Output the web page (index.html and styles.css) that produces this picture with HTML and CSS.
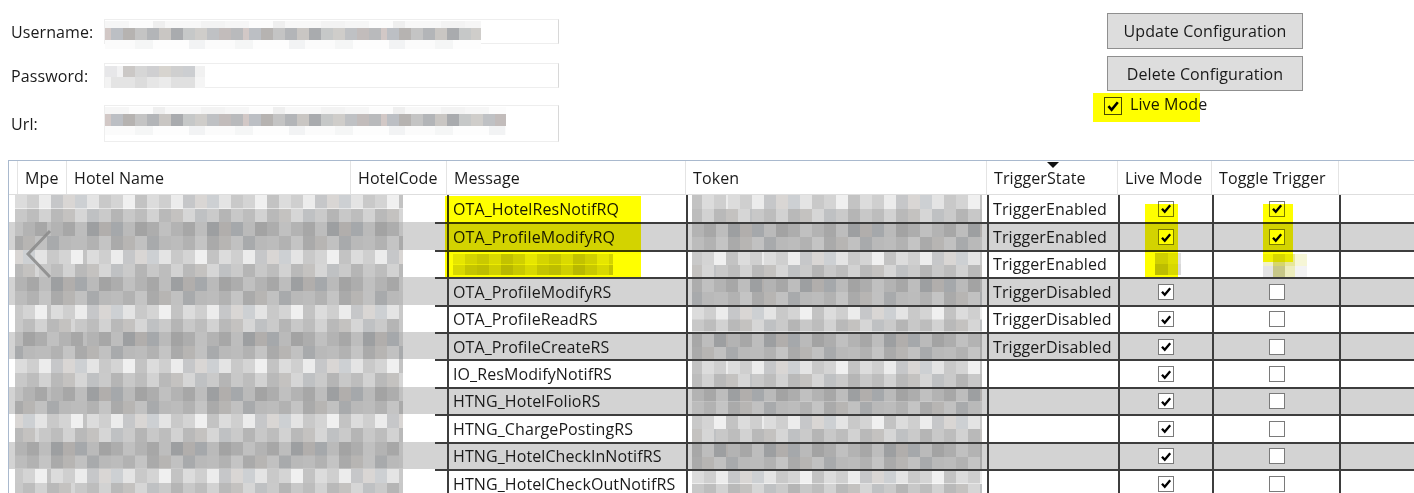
FILE: index.html
```html
<!DOCTYPE html>
<html>
<head>
<meta charset="utf-8">
<title>Configuration</title>
<link rel="stylesheet" href="styles.css">
</head>
<body>
<div class="top">
  <div class="form">
    <div class="frow r1">
      <span class="lbl">Username:</span>
      <div class="tbox">
        <div class="strip faint w-user mt-2"></div>
        <div class="strip mz-mid w-user"></div>
        <div class="strip faint2 w-user"></div>
      </div>
    </div>
    <div class="frow r2">
      <span class="lbl">Password:</span>
      <div class="tbox">
        <div class="strip pw1 w-pass mt-3"></div>
        <div class="strip pw2 w-pass"></div>
      </div>
    </div>
    <div class="frow r3">
      <span class="lbl">Url:</span>
      <div class="tbox">
        <div class="strip faint w-url mt-2"></div>
        <div class="strip mz-mid w-url"></div>
        <div class="strip faint2 w-url"></div>
      </div>
    </div>
  </div>
  <div class="actions">
    <button class="btn b1">Update Configuration</button>
    <button class="btn b2">Delete Configuration</button>
    <label class="live">
      <span class="cb cb-top"><svg viewBox="0 0 16 16"><path d="M3.4 8.2 L6.6 11.8 L12.8 4.2" fill="none" stroke="#000" stroke-width="2.6"/></svg></span>
      <span class="live-txt">Live Mode</span>
      <span class="hl hl-live"></span>
    </label>
  </div>
</div>

<div class="grid">
  <div class="ghead">
    <div class="hc"></div>
    <div class="hc">Mpe</div>
    <div class="hc">Hotel Name</div>
    <div class="hc">HotelCode</div>
    <div class="hc">Message</div>
    <div class="hc">Token</div>
    <div class="hc">TriggerState</div>
    <div class="hc">Live Mode</div>
    <div class="hc">Toggle Trigger</div>
    <div class="hc hc-rest"></div>
    <span class="sort"></span>
  </div>
  <div class="gbody">
    <div class="row">
      <div class="blurc"><div class="mz mz-l o1"></div></div>
      <div class="dc msg">OTA_HotelResNotifRQ</div>
      <div class="dc tok"><div class="mz mz-l o2"></div></div>
      <div class="dc trig">TriggerEnabled</div>
      <div class="dc cbc"><span class="cb"><svg viewBox="0 0 16 16"><path d="M3.4 8.2 L6.6 11.8 L12.8 4.2" fill="none" stroke="#000" stroke-width="2.6"/></svg></span></div>
      <div class="dc cbc"><span class="cb"><svg viewBox="0 0 16 16"><path d="M3.4 8.2 L6.6 11.8 L12.8 4.2" fill="none" stroke="#000" stroke-width="2.6"/></svg></span></div>
      <div class="dc rest"></div>
    </div>
    <div class="row alt">
      <div class="blurc"><div class="mz mz-d o2"></div></div>
      <div class="dc msg">OTA_ProfileModifyRQ</div>
      <div class="dc tok"><div class="mz mz-d o1"></div></div>
      <div class="dc trig">TriggerEnabled</div>
      <div class="dc cbc"><span class="cb"><svg viewBox="0 0 16 16"><path d="M3.4 8.2 L6.6 11.8 L12.8 4.2" fill="none" stroke="#000" stroke-width="2.6"/></svg></span></div>
      <div class="dc cbc"><span class="cb"><svg viewBox="0 0 16 16"><path d="M3.4 8.2 L6.6 11.8 L12.8 4.2" fill="none" stroke="#000" stroke-width="2.6"/></svg></span></div>
      <div class="dc rest"></div>
    </div>
    <div class="row">
      <div class="blurc"><div class="mz mz-l o3"></div></div>
      <div class="dc msg"><div class="mz mz-msg"></div></div>
      <div class="dc tok"><div class="mz mz-l o3"></div></div>
      <div class="dc trig">TriggerEnabled</div>
      <div class="dc cbc"><span class="blob blob-lm"></span></div>
      <div class="dc cbc"><span class="blob blob-tt"></span></div>
      <div class="dc rest"></div>
    </div>
    <div class="row alt">
      <div class="blurc"><div class="mz mz-d o1"></div></div>
      <div class="dc msg">OTA_ProfileModifyRS</div>
      <div class="dc tok"><div class="mz mz-d o3"></div></div>
      <div class="dc trig">TriggerDisabled</div>
      <div class="dc cbc"><span class="cb"><svg viewBox="0 0 16 16"><path d="M3.4 8.2 L6.6 11.8 L12.8 4.2" fill="none" stroke="#000" stroke-width="2.6"/></svg></span></div>
      <div class="dc cbc"><span class="cb"></span></div>
      <div class="dc rest"></div>
    </div>
    <div class="row">
      <div class="blurc"><div class="mz mz-l o2"></div></div>
      <div class="dc msg">OTA_ProfileReadRS</div>
      <div class="dc tok"><div class="mz mz-l o1"></div></div>
      <div class="dc trig">TriggerDisabled</div>
      <div class="dc cbc"><span class="cb"><svg viewBox="0 0 16 16"><path d="M3.4 8.2 L6.6 11.8 L12.8 4.2" fill="none" stroke="#000" stroke-width="2.6"/></svg></span></div>
      <div class="dc cbc"><span class="cb"></span></div>
      <div class="dc rest"></div>
    </div>
    <div class="row alt">
      <div class="blurc"><div class="mz mz-d o3"></div></div>
      <div class="dc msg">OTA_ProfileCreateRS</div>
      <div class="dc tok"><div class="mz mz-d o2"></div></div>
      <div class="dc trig">TriggerDisabled</div>
      <div class="dc cbc"><span class="cb"><svg viewBox="0 0 16 16"><path d="M3.4 8.2 L6.6 11.8 L12.8 4.2" fill="none" stroke="#000" stroke-width="2.6"/></svg></span></div>
      <div class="dc cbc"><span class="cb"></span></div>
      <div class="dc rest"></div>
    </div>
    <div class="row">
      <div class="blurc"><div class="mz mz-l o1"></div></div>
      <div class="dc msg">IO_ResModifyNotifRS</div>
      <div class="dc tok"><div class="mz mz-l o2"></div></div>
      <div class="dc trig"></div>
      <div class="dc cbc"><span class="cb"><svg viewBox="0 0 16 16"><path d="M3.4 8.2 L6.6 11.8 L12.8 4.2" fill="none" stroke="#000" stroke-width="2.6"/></svg></span></div>
      <div class="dc cbc"><span class="cb"></span></div>
      <div class="dc rest"></div>
    </div>
    <div class="row alt">
      <div class="blurc"><div class="mz mz-d o2"></div></div>
      <div class="dc msg">HTNG_HotelFolioRS</div>
      <div class="dc tok"><div class="mz mz-d o1"></div></div>
      <div class="dc trig"></div>
      <div class="dc cbc"><span class="cb"><svg viewBox="0 0 16 16"><path d="M3.4 8.2 L6.6 11.8 L12.8 4.2" fill="none" stroke="#000" stroke-width="2.6"/></svg></span></div>
      <div class="dc cbc"><span class="cb"></span></div>
      <div class="dc rest"></div>
    </div>
    <div class="row">
      <div class="blurc"><div class="mz mz-l o3"></div></div>
      <div class="dc msg">HTNG_ChargePostingRS</div>
      <div class="dc tok"><div class="mz mz-l o3"></div></div>
      <div class="dc trig"></div>
      <div class="dc cbc"><span class="cb"><svg viewBox="0 0 16 16"><path d="M3.4 8.2 L6.6 11.8 L12.8 4.2" fill="none" stroke="#000" stroke-width="2.6"/></svg></span></div>
      <div class="dc cbc"><span class="cb"></span></div>
      <div class="dc rest"></div>
    </div>
    <div class="row alt">
      <div class="blurc"><div class="mz mz-d o1"></div></div>
      <div class="dc msg">HTNG_HotelCheckInNotifRS</div>
      <div class="dc tok"><div class="mz mz-d o2"></div></div>
      <div class="dc trig"></div>
      <div class="dc cbc"><span class="cb"><svg viewBox="0 0 16 16"><path d="M3.4 8.2 L6.6 11.8 L12.8 4.2" fill="none" stroke="#000" stroke-width="2.6"/></svg></span></div>
      <div class="dc cbc"><span class="cb"></span></div>
      <div class="dc rest"></div>
    </div>
    <div class="row">
      <div class="blurc"><div class="mz mz-l o2"></div></div>
      <div class="dc msg">HTNG_HotelCheckOutNotifRS</div>
      <div class="dc tok"><div class="mz mz-l o1"></div></div>
      <div class="dc trig"></div>
      <div class="dc cbc"><span class="cb"><svg viewBox="0 0 16 16"><path d="M3.4 8.2 L6.6 11.8 L12.8 4.2" fill="none" stroke="#000" stroke-width="2.6"/></svg></span></div>
      <div class="dc cbc"><span class="cb"></span></div>
      <div class="dc rest"></div>
    </div>

    <svg class="chev" viewBox="0 0 28 50"><polyline points="25,2 3,25 25,48" fill="none" stroke="#8a8a8a" stroke-width="3"/></svg>
    <span class="hl hl-msg"></span>
    <span class="hl hl-lm"></span>
    <span class="hl hl-tt"></span>
  </div>
</div>
</body>
</html>
```

FILE: styles.css
```css
* { box-sizing: border-box; }

body {
  margin: 0;
  font-family: "Open Sans", "Noto Sans", sans-serif;
  font-size: 16px;
  letter-spacing: 0.1px;
  color: #1a1a1a;
  background: #fff;
  overflow: hidden;
}

/* ---------- top area ---------- */
.top {
  display: flex;
  height: 160px;
}

.form {
  display: flex;
  flex-direction: column;
  padding-left: 11px;
}

.frow {
  display: flex;
  align-items: center;
}

.r1 { margin-top: 19px; height: 25px; }
.r2 { margin-top: 19px; height: 25px; }
.r3 { margin-top: 17px; height: 37px; }

.lbl { width: 93px; white-space: nowrap; }

.tbox {
  align-self: stretch;
  width: 455px;
  border: 1px solid #eeeeee;
  border-right-color: #d8d8d8;
  display: flex;
  flex-direction: column;
}

.strip { height: 7px; flex: none; }
.mt-2 { margin-top: 1px; }
.mt-3 { margin-top: 2px; }
.w-user { width: 376px; }
.w-pass { width: 100px; }
.w-url { width: 401px; }

.strip.mz-mid {
  height: 12px;
  background-image: repeating-linear-gradient(90deg,
    #d2c8c6 0 6px, #bcbfc4 6px 18px, #b6b3b1 18px 30px, #c4c4c4 30px 42px, #b3b5b8 42px 54px,
    #c9c6c3 54px 66px, #a9abae 66px 78px, #c6c8c8 78px 90px, #cfcdca 90px 102px, #bfc1c4 102px 114px,
    #c2bcbb 114px 126px, #b9babc 126px 138px);
}
.strip.faint {
  background-image: repeating-linear-gradient(90deg,
    #f6f6f6 0 24px, #fcfcfc 24px 48px, #efefef 48px 60px, #f8f8f8 60px 96px, #f3f3f3 96px 120px);
}
.strip.faint2 {
  height: 9px;
  background-image: repeating-linear-gradient(90deg,
    #fbfbfb 0 30px, #f5f6f6 30px 48px, #fdfdfd 48px 84px, #f2f3f4 84px 100px);
}
.strip.pw1 {
  height: 11px;
  background-image: repeating-linear-gradient(90deg,
    #e7e7e9 0 12px, #f2f2f3 12px 18px, #cbc8c6 18px 30px, #d6d6d6 30px 42px, #cfcfd1 42px 54px,
    #d7d4cf 54px 66px, #cfcfcf 66px 78px, #ccced1 78px 90px, #f1f1f1 90px 100px);
}
.strip.pw2 {
  height: 11px;
  background-image: repeating-linear-gradient(90deg,
    #f3f3f3 0 6px, #e4e4e4 6px 30px, #dcdcdc 30px 42px, #e6e6e6 42px 54px, #ebebeb 54px 66px,
    #e0e0e0 66px 90px, #f5f5f5 90px 100px);
}

.actions {
  margin-left: auto;
  margin-right: 111px;
  width: 196px;
  padding-top: 13px;
  display: flex;
  flex-direction: column;
}

.btn {
  font: inherit;
  letter-spacing: inherit;
  color: #1a1a1a;
  background: #dddddd;
  border: 1px solid #8f8f8f;
  padding: 0;
  margin: 0;
}
.b1 { height: 36px; }
.b2 { height: 35px; margin-top: 7px; }

.live {
  position: relative;
  display: flex;
  align-items: flex-start;
  height: 29px;
  margin-top: 2px;
  margin-left: -14px;
  padding-left: 11px;
  padding-top: 4px;
  gap: 8px;
}
.live-txt { line-height: 20px; margin-top: -3px; }

.cb {
  width: 16px;
  height: 16px;
  border: 1px solid #7a7a7a;
  background: #fff;
  display: flex;
  align-items: center;
  justify-content: center;
  flex: none;
}
.cb svg { width: 15px; height: 15px; display: block; }
.cb-top { width: 18px; height: 18px; border-color: #4a4a4a; }
.cb-top svg { width: 16px; height: 16px; }

.hl {
  position: absolute;
  background: #ffff00;
  mix-blend-mode: multiply;
  pointer-events: none;
}
.hl-live { left: 0; top: 0; width: 107px; height: 29px; }

/* ---------- grid ---------- */
.grid {
  --cols: 9px 49px 284px 96px 239px 301px 131px 94px 127px 1fr;
  margin-left: 8px;
  border-top: 1px solid #a9b9ce;
  border-left: 1px solid #a9b9ce;
}

.ghead {
  position: relative;
  display: grid;
  grid-template-columns: var(--cols);
  height: 34px;
  border-bottom: 1px solid #dedede;
}

.hc {
  display: flex;
  align-items: center;
  padding-left: 7px;
  border-right: 1px solid #e4e4e4;
  white-space: nowrap;
}
.hc-rest { border-right: none; }

.sort {
  position: absolute;
  left: 1038px;
  top: 1px;
  width: 0;
  height: 0;
  border-left: 6px solid transparent;
  border-right: 6px solid transparent;
  border-top: 6px solid #111;
}

.gbody { position: relative; }

.row {
  display: grid;
  grid-template-columns: var(--cols);
  height: 27.4px;
  background-color: #ffffff;
}
.row.alt { background-color: #d3d3d3; }

.blurc {
  grid-column: 1 / 5;
  display: flex;
  padding-left: 6px;
  background-color: #ffffff;
}
.row.alt .blurc { background-color: #d3d3d3; }
.blurc .mz { width: 388px; flex: none; }
.blurc::after {
  content: "";
  width: 12px;
  margin-left: auto;
}
.row + .row .blurc::after { border-top: 2px solid #3d3d3d; }

.dc {
  border-left: 2px solid #3d3d3d;
  display: flex;
  align-items: center;
  white-space: nowrap;
  overflow: hidden;
}
.row + .row .dc { border-top: 2px solid #3d3d3d; }

.msg { padding-left: 4px; }
.trig { padding-left: 4px; }
.tok { padding: 0 5px 0 4px; align-items: stretch; }
.tok .mz { flex: 1; }
.cbc { justify-content: center; }

/* ---------- mosaic (pixelated blur) ---------- */
.mz {
  align-self: stretch;
  background-repeat: repeat-x;
  background-size: 100% 50%, 100% 50%;
  background-position: 0 0, 0 100%;
}
.mz.o2 { background-position: 36px 0, 60px 100%; }
.mz.o3 { background-position: 72px 0, 24px 100%; }

.mz-l {
  background-image:
    repeating-linear-gradient(90deg,
      #dcdcdc 0 12px, #cfcfcf 12px 24px, #ececec 24px 36px, #c6c7c9 36px 48px,
      #d9d6d4 48px 60px, #cdd0d3 60px 72px, #e4e4e4 72px 84px, #c9c9c9 84px 96px,
      #d4d4d4 96px 108px, #f0f0f0 108px 120px, #c3c3c3 120px 132px),
    repeating-linear-gradient(90deg,
      #c8c8c8 0 12px, #bdbdbd 12px 24px, #d2d2d2 24px 36px, #b9b9b9 36px 48px,
      #c4c2c0 48px 60px, #d6d6d6 60px 72px, #bfc1c3 72px 84px, #cacaca 84px 96px,
      #b5b5b5 96px 108px);
}

.mz-d {
  background-image:
    repeating-linear-gradient(90deg,
      #b3b3b3 0 12px, #a7a7a7 12px 24px, #bdbdbd 24px 36px, #9d9fa1 36px 48px,
      #b1aeac 48px 60px, #a5a8ab 60px 72px, #bababa 72px 84px, #a3a3a3 84px 96px,
      #adadad 96px 108px, #c0c0c0 108px 120px),
    repeating-linear-gradient(90deg,
      #bcbcbc 0 12px, #b2b2b2 12px 24px, #c4c4c4 24px 36px, #aaaaaa 36px 48px,
      #b7b5b3 48px 60px, #c1c1c1 60px 72px, #a8aaac 72px 84px, #b9b9b9 84px 96px);
}

.mz-msg {
  width: 160px;
  flex: none;
  margin: 2px 0;
  background-image:
    repeating-linear-gradient(90deg,
      #e6e6e6 0 12px, #d4d4d4 12px 24px, #c9c9c9 24px 36px, #dadada 36px 48px,
      #c2c2c2 48px 60px, #d0d0d0 60px 72px),
    repeating-linear-gradient(90deg,
      #d8d8d8 0 12px, #c4c4c4 12px 24px, #bdbdbd 24px 36px, #cfcfcf 36px 48px,
      #b8b8b8 48px 60px, #c8c8c8 60px 72px);
}

.blob {
  display: block;
  flex: none;
}
.blob-lm {
  width: 26px;
  height: 22px;
  margin-left: 4px;
  background:
    linear-gradient(90deg, #cfcfcf 0 13px, #e0e0e0 13px 26px) 0 0 / 100% 50% no-repeat,
    linear-gradient(90deg, #bdbdbd 0 13px, #d8d8d8 13px 26px) 0 100% / 100% 50% no-repeat;
}
.blob-tt {
  width: 44px;
  height: 24px;
  margin-left: 16px;
  margin-top: 4px;
  background:
    linear-gradient(90deg, #f1f1c8 0 10px, #d6d66a 10px 22px, #e7e79a 22px 32px, #f6f6d6 32px 44px) 0 0 / 100% 50% no-repeat,
    linear-gradient(90deg, #e4e4e4 0 10px, #c7c787 10px 22px, #ededbd 22px 32px, #f3f3f3 32px 44px) 0 100% / 100% 50% no-repeat;
}

.chev {
  position: absolute;
  left: 16px;
  top: 34px;
  width: 28px;
  height: 50px;
  opacity: 0.85;
}

.hl-msg { left: 436px; top: 1px; width: 196px; height: 81px; }
.hl-lm { left: 1136px; top: 9px; width: 33px; height: 73px; }
.hl-tt { left: 1254px; top: 9px; width: 30px; height: 58px; }
```
